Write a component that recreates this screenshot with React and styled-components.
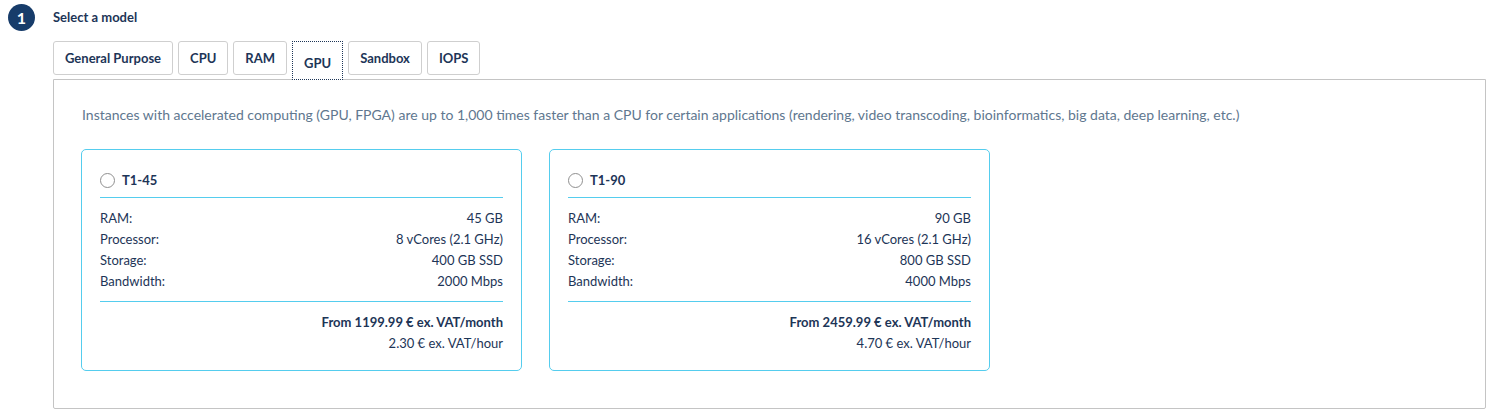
import styled, { createGlobalStyle } from 'styled-components'

const GlobalStyle = createGlobalStyle`
  body {
    margin: 0;
    background: #fff;
    font-family: Lato, "Liberation Sans", sans-serif;
    color: #1d3557;
  }
`

const tabs = ['General Purpose', 'CPU', 'RAM', 'GPU', 'Sandbox', 'IOPS']

const models = [
  {
    name: 'T1-45',
    ram: '45 GB',
    cpu: '8 vCores (2.1 GHz)',
    storage: '400 GB SSD',
    bandwidth: '2000 Mbps',
    month: 'From 1199.99 € ex. VAT/month',
    hour: '2.30 € ex. VAT/hour',
  },
  {
    name: 'T1-90',
    ram: '90 GB',
    cpu: '16 vCores (2.1 GHz)',
    storage: '800 GB SSD',
    bandwidth: '4000 Mbps',
    month: 'From 2459.99 € ex. VAT/month',
    hour: '4.70 € ex. VAT/hour',
  },
]

export default function App() {
  return (
    <>
      <GlobalStyle />
      <Step>
        <StepHead>
          <StepNumber>1</StepNumber>
          <StepTitle>Select a model</StepTitle>
        </StepHead>
        <TabBar>
          {tabs.map((t) => (
            <Tab key={t} active={t === 'GPU'}>
              {t}
            </Tab>
          ))}
        </TabBar>
        <Panel>
          <Description>
            Instances with accelerated computing (GPU, FPGA) are up to 1,000 times faster than a CPU for
            certain applications (rendering, video transcoding, bioinformatics, big data, deep learning, etc.)
          </Description>
          <Cards>
            {models.map((m) => (
              <Card key={m.name}>
                <CardHead>
                  <Radio />
                  <CardTitle>{m.name}</CardTitle>
                </CardHead>
                <Specs>
                  <Spec>
                    <span>RAM:</span>
                    <span>{m.ram}</span>
                  </Spec>
                  <Spec>
                    <span>Processor:</span>
                    <span>{m.cpu}</span>
                  </Spec>
                  <Spec>
                    <span>Storage:</span>
                    <span>{m.storage}</span>
                  </Spec>
                  <Spec>
                    <span>Bandwidth:</span>
                    <span>{m.bandwidth}</span>
                  </Spec>
                </Specs>
                <Price>
                  <strong>{m.month}</strong>
                  <span>{m.hour}</span>
                </Price>
              </Card>
            ))}
          </Cards>
        </Panel>
      </Step>
    </>
  )
}

const Step = styled.section`
  padding: 4px 9px 0 53px;
`

const StepHead = styled.div`
  display: flex;
  align-items: center;
  margin-left: -45px;
  gap: 18px;
  height: 26px;
`

const StepNumber = styled.span`
  width: 27px;
  height: 27px;
  border-radius: 50%;
  background: #173c6a;
  color: #fff;
  font-weight: 700;
  font-size: 16px;
  display: flex;
  align-items: center;
  justify-content: center;
`

const StepTitle = styled.h2`
  margin: 0;
  font-size: 13px;
  font-weight: 700;
  color: #1d3557;
`

const TabBar = styled.div`
  display: flex;
  gap: 5px;
  margin-top: 11px;
  position: relative;
  z-index: 1;
  align-items: flex-start;
`

const Tab = styled.button`
  font-family: inherit;
  font-size: 13px;
  font-weight: 700;
  color: #1d3557;
  background: #fff;
  height: ${(p) => (p.active ? '39px' : '34px')};
  padding: ${(p) => (p.active ? '4px 11px 0' : '0 11px')};
  border: 1px ${(p) => (p.active ? 'dotted #1d3557' : 'solid #cfcfcf')};
  border-radius: ${(p) => (p.active ? '0' : '3px')};
  cursor: pointer;
`

const Panel = styled.div`
  margin-top: -1px;
  border: 1px solid #c4c4c4;
  border-radius: 0 0 2px 2px;
  padding: 25px 28px 37px 27px;
`

const Description = styled.p`
  margin: 0 0 0 1px;
  font-size: 14px;
  line-height: 20px;
  color: #60778f;
`

const Cards = styled.div`
  display: flex;
  gap: 27px;
  margin-top: 24px;
`

const Card = styled.div`
  width: 441px;
  box-sizing: border-box;
  border: 1px solid #55cdee;
  border-radius: 5px;
  padding: 20px 18px 16px;
`

const CardHead = styled.div`
  display: flex;
  align-items: center;
  gap: 7px;
  height: 20px;
  padding-bottom: 7px;
  border-bottom: 1px solid #55cdee;
`

const Radio = styled.span`
  width: 13px;
  height: 13px;
  border: 1px solid #8f8f8f;
  border-radius: 50%;
`

const CardTitle = styled.span`
  font-size: 13px;
  font-weight: 700;
  color: #1d3557;
`

const Specs = styled.div`
  padding: 10px 0 9px;
  border-bottom: 1px solid #55cdee;
`

const Spec = styled.div`
  display: flex;
  justify-content: space-between;
  font-size: 13px;
  line-height: 21px;
  color: #1d3557;
`

const Price = styled.div`
  display: flex;
  flex-direction: column;
  align-items: flex-end;
  padding-top: 10px;
  font-size: 13px;
  line-height: 21px;
  color: #1d3557;
  strong {
    font-weight: 700;
  }
`
